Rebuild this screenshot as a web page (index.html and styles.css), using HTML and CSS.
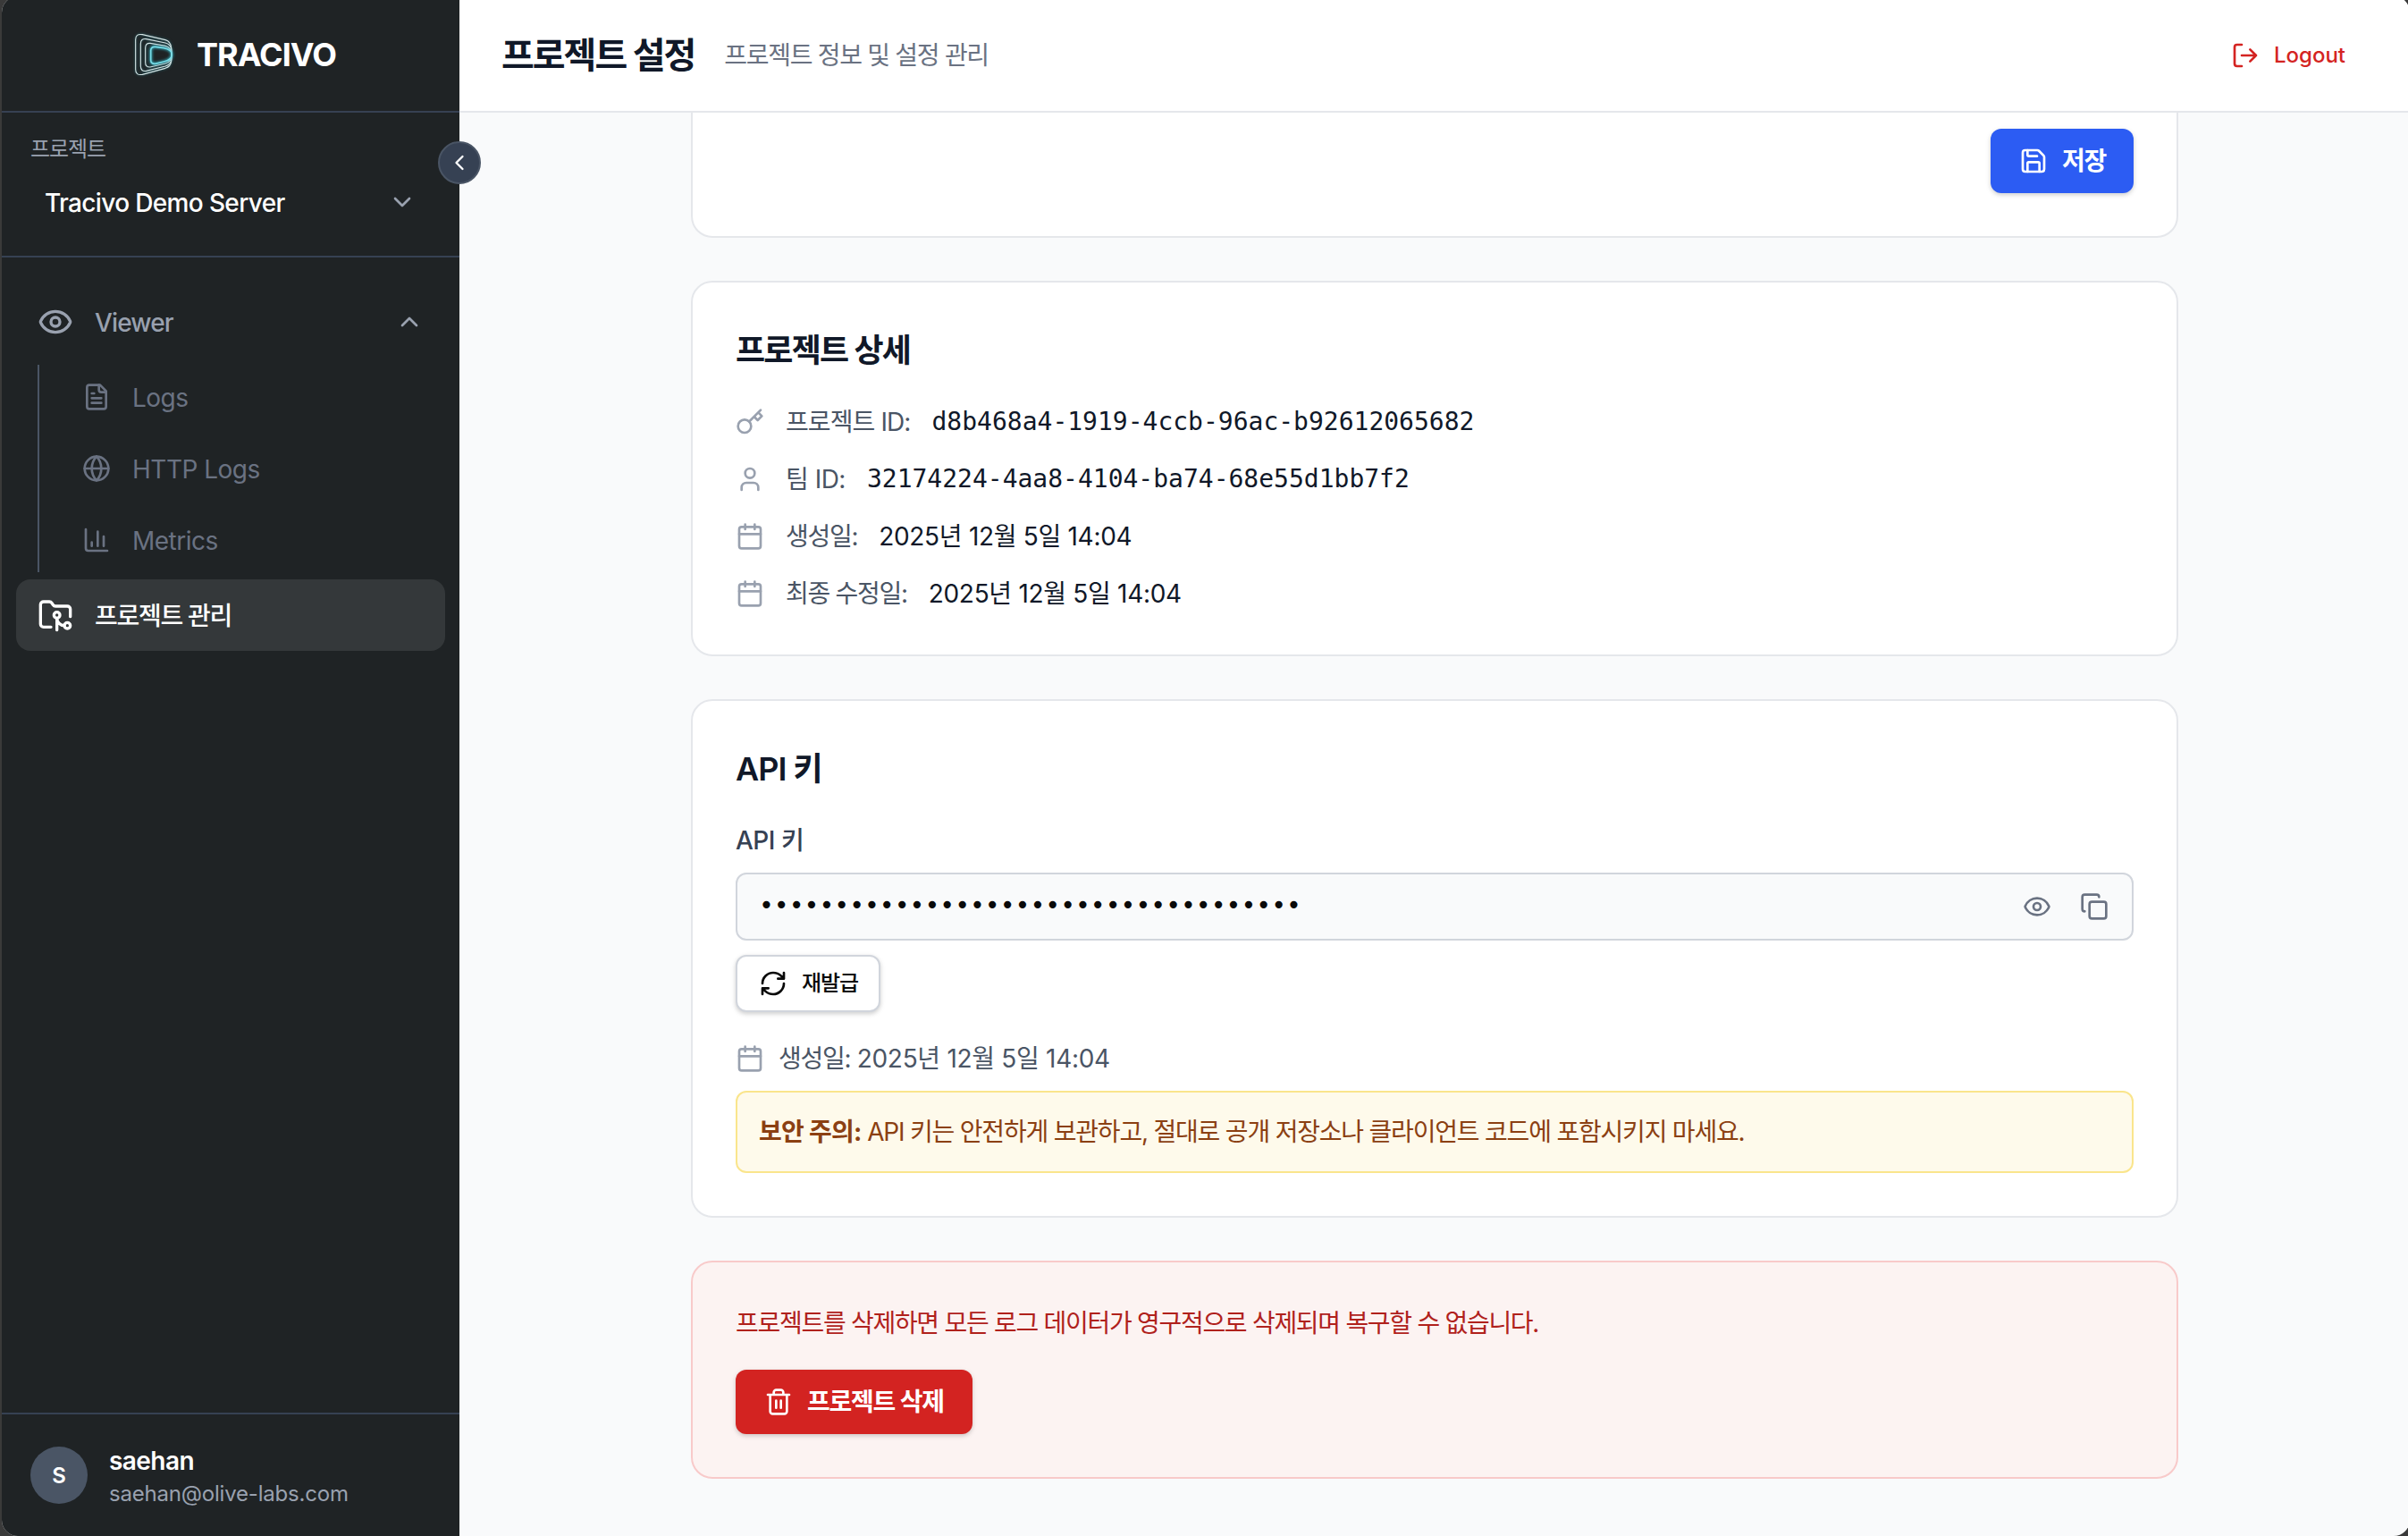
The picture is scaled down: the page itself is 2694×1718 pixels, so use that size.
FILE: index.html
```html
<!DOCTYPE html>
<html lang="ko">
<head>
<meta charset="utf-8">
<title>TRACIVO</title>
<link rel="stylesheet" href="styles.css">
</head>
<body>
<svg class="defs" width="0" height="0" aria-hidden="true">
  <symbol id="eye" viewBox="0 0 24 24"><path d="M2.062 12.348a1 1 0 0 1 0-.696 10.75 10.75 0 0 1 19.876 0 1 1 0 0 1 0 .696 10.75 10.75 0 0 1-19.876 0"/><circle cx="12" cy="12" r="3"/></symbol>
  <symbol id="calendar" viewBox="0 0 24 24"><path d="M8 2v4M16 2v4M3 10h18"/><rect x="3" y="4" width="18" height="18" rx="2"/></symbol>
</svg>
<div class="app">
  <aside class="sidebar">
    <div class="brand">
      <svg class="logo" viewBox="0 0 270 240">
        <path class="ring" d="M65 70Q65 49 88 53L165 71Q183 76 185 98V142Q183 160 165 166L88 187Q65 191 65 170Z"/>
        <path class="ring" d="M82 84Q82 65 101 68L165 81Q184 86 186 105V135Q184 153 165 159L101 175Q82 178 82 159Z"/>
        <path class="ring" d="M98 98Q98 81 114 82L165 91Q186 97 187 120Q186 145 165 150L114 162Q98 163 98 147Z"/>
        <path class="ring core" d="M116 106Q117 93 131 94L160 98Q187 104 187 120Q187 138 160 144L131 151Q117 152 116 139Z"/>
      </svg>
      <span class="brand-name">TRACIVO</span>
    </div>
    <div class="project">
      <div class="project-label ko">프로젝트</div>
      <div class="project-select"><span class="project-name">Tracivo Demo Server</span>
        <svg class="icon" viewBox="0 0 24 24"><path d="m6 9 6 6 6-6"/></svg></div>
    </div>
    <nav class="nav">
      <div class="nav-item"><svg class="icon icon-lg"><use href="#eye"/></svg><span class="nav-text">Viewer</span>
        <svg class="icon" viewBox="0 0 24 24"><path d="m18 15-6-6-6 6"/></svg></div>
      <div class="subnav">
        <div class="sub-item"><svg class="icon" viewBox="0 0 24 24"><path d="M15 2H6a2 2 0 0 0-2 2v16a2 2 0 0 0 2 2h12a2 2 0 0 0 2-2V7Z"/><path d="M14 2v4a2 2 0 0 0 2 2h4M10 9H8M16 13H8M16 17H8"/></svg><span>Logs</span></div>
        <div class="sub-item"><svg class="icon" viewBox="0 0 24 24"><circle cx="12" cy="12" r="10"/><path d="M12 2a14.5 14.5 0 0 0 0 20 14.5 14.5 0 0 0 0-20M2 12h20"/></svg><span>HTTP Logs</span></div>
        <div class="sub-item"><svg class="icon" viewBox="0 0 24 24"><path d="M3 3v16a2 2 0 0 0 2 2h16M18 17V9M13 17V5M8 17v-3"/></svg><span>Metrics</span></div>
      </div>
      <div class="nav-item active"><svg class="icon icon-lg" viewBox="0 0 24 24"><path d="M18 19a5 5 0 0 1-5-5v8"/><path d="M9 20H4a2 2 0 0 1-2-2V5a2 2 0 0 1 2-2h3.9a2 2 0 0 1 1.69.9l.81 1.2a2 2 0 0 0 1.67.9H20a2 2 0 0 1 2 2v5"/><circle cx="13" cy="12" r="2"/><circle cx="20" cy="19" r="2"/></svg><span class="nav-text ko">프로젝트 관리</span></div>
    </nav>
    <div class="user">
      <div class="avatar">S</div>
      <div><div class="user-name">saehan</div><div class="user-mail">saehan@olive-labs.com</div></div>
    </div>
    <button class="collapse"><svg class="icon icon-sm" viewBox="0 0 24 24"><path d="m15 18-6-6 6-6"/></svg></button>
  </aside>
  <div class="main">
    <header class="topbar">
      <h1>프로젝트 설정</h1>
      <p class="ko">프로젝트 정보 및 설정 관리</p>
      <a class="logout"><svg class="icon" viewBox="0 0 24 24"><path d="M9 21H5a2 2 0 0 1-2-2V5a2 2 0 0 1 2-2h4M16 17l5-5-5-5M21 12H9"/></svg><span>Logout</span></a>
    </header>
    <main class="content">
      <section class="card card-cut">
        <button class="btn btn-blue"><svg class="icon" viewBox="0 0 24 24"><path d="M15.2 3a2 2 0 0 1 1.4.6l3.8 3.8a2 2 0 0 1 .6 1.4V19a2 2 0 0 1-2 2H5a2 2 0 0 1-2-2V5a2 2 0 0 1 2-2z"/><path d="M17 21v-7a1 1 0 0 0-1-1H8a1 1 0 0 0-1 1v7M7 3v4a1 1 0 0 0 1 1h7"/></svg><span class="ko">저장</span></button>
      </section>
      <section class="card">
        <h2>프로젝트 상세</h2>
        <div class="details">
          <div class="row"><svg class="icon" viewBox="0 0 24 24"><circle cx="7.5" cy="15.5" r="5.5"/><path d="m21 2-9.6 9.6M15.5 7.5l3 3L22 7l-3-3"/></svg><span class="key mixed">프로젝트 ID:</span><span class="mono">d8b468a4-1919-4ccb-96ac-b92612065682</span></div>
          <div class="row"><svg class="icon" viewBox="0 0 24 24"><path d="M19 21v-2a4 4 0 0 0-4-4H9a4 4 0 0 0-4 4v2"/><circle cx="12" cy="7" r="4"/></svg><span class="key latin">팀 ID:</span><span class="mono">32174224-4aa8-4104-ba74-68e55d1bb7f2</span></div>
          <div class="row"><svg class="icon"><use href="#calendar"/></svg><span class="key ko">생성일:</span><span class="date">2025년 12월 5일 14:04</span></div>
          <div class="row"><svg class="icon"><use href="#calendar"/></svg><span class="key ko">최종 수정일:</span><span class="date">2025년 12월 5일 14:04</span></div>
        </div>
      </section>
      <section class="card">
        <h2 class="title-mixed">API 키</h2>
        <div class="field-label">API 키</div>
        <div class="secret"><span class="dots">••••••••••••••••••••••••••••••••••••</span>
          <svg class="icon"><use href="#eye"/></svg>
          <svg class="icon" viewBox="0 0 24 24"><rect x="8" y="8" width="14" height="14" rx="2"/><path d="M4 16c-1.1 0-2-.9-2-2V4c0-1.1.9-2 2-2h10c1.1 0 2 .9 2 2"/></svg></div>
        <button class="btn btn-outline"><svg class="icon" viewBox="0 0 24 24"><path d="M3 12a9 9 0 0 1 9-9 9.75 9.75 0 0 1 6.74 2.74L21 8M21 3v5h-5M21 12a9 9 0 0 1-9 9 9.75 9.75 0 0 1-6.74-2.74L3 16M8 16H3v5"/></svg><span class="ko">재발급</span></button>
        <div class="row issued"><svg class="icon"><use href="#calendar"/></svg><span class="issued-text"><span class="issued-key">생성일:</span> 2025년 12월 5일 14:04</span></div>
        <div class="notice"><strong>보안 주의:</strong> API 키는 안전하게 보관하고, 절대로 공개 저장소나 클라이언트 코드에 포함시키지 마세요.</div>
      </section>
      <section class="card danger">
        <p class="ko">프로젝트를 삭제하면 모든 로그 데이터가 영구적으로 삭제되며 복구할 수 없습니다.</p>
        <button class="btn btn-red"><svg class="icon" viewBox="0 0 24 24"><path d="M3 6h18M19 6v14c0 1-1 2-2 2H7c-1 0-2-1-2-2V6M8 6V4c0-1 1-2 2-2h4c1 0 2 1 2 2v2M10 11v6M14 11v6"/></svg><span class="ko">프로젝트 삭제</span></button>
      </section>
    </main>
  </div>
</div>
</body>
</html>
```
FILE: styles.css
```css
* { box-sizing: border-box; margin: 0; padding: 0; }
html, body { height: 1718px; overflow: hidden; }
body {
  background: #3a3a3a;
  color: #0a0a0a;
  font-family: Inter, "Noto Sans CJK KR", sans-serif;
  font-size: 28px;
  line-height: 40px;
  white-space: nowrap;
}
button { font: inherit; color: inherit; border: 0; background: none; }
.defs { display: block; }
.ko { letter-spacing: -0.046em; }
.mixed { letter-spacing: -0.9px; }
.latin { letter-spacing: -0.5px; }

.icon {
  width: 32px;
  height: 32px;
  flex: none;
  fill: none;
  stroke: currentColor;
  stroke-width: 2;
  stroke-linecap: round;
  stroke-linejoin: round;
}
.icon-lg { width: 40px; height: 40px; }
.icon-sm { width: 28px; height: 28px; }

/* The window frame reaches slightly past the viewport */
.app {
  display: flex;
  width: 2694px;
  height: 1722px;
  margin: -4px 0 0 2px;
  border-radius: 18px;
  overflow: hidden;
  background: #f9fafb;
}

/* Sidebar */
.sidebar {
  position: relative;
  z-index: 1;
  flex: none;
  width: 512px;
  display: flex;
  flex-direction: column;
  background: #1f2325;
  color: #fff;
}
.brand {
  display: flex;
  align-items: center;
  height: 130px;
  padding: 2px 0 0 128px;
  border-bottom: 2px solid #364153;
}
.logo { width: 90px; height: 80px; filter: drop-shadow(0 0 1.5px #2b6b74); }
.ring { fill: none; stroke: #d3e3e4; stroke-width: 3.4; }
.core { stroke: #77dbe6; stroke-width: 5; filter: drop-shadow(0 0 5px #36bccb); }
.brand-name { font-size: 36px; font-weight: 700; letter-spacing: -1px; }
.project {
  height: 162px;
  padding: 21px 48px 0 32px;
  border-bottom: 2px solid #364153;
}
.project-label { font-size: 24px; line-height: 40px; color: #99a1af; }
.project-select {
  display: flex;
  align-items: center;
  justify-content: space-between;
  height: 78px;
  padding-left: 16px;
  font-weight: 500;
}
.project-select .icon { color: #99a1af; }
.project-name { padding-top: 1px; letter-spacing: -0.65px; }
.nav { flex: 1; padding: 32px 16px 0; font-weight: 500; }
.nav-item {
  display: flex;
  align-items: center;
  gap: 24px;
  height: 80px;
  padding: 0 24px;
  color: #99a1af;
}
.nav-text { flex: 1; padding-top: 1px; }
.nav-item .nav-text:not(.ko) { letter-spacing: -0.85px; }
.active { border-radius: 16px; background: #34383a; color: #fff; }
.subnav {
  display: grid;
  gap: 8px;
  margin: 8px 0 8px 24px;
  border-left: 2px solid #4a5565;
  color: #6a7282;
  font-weight: 400;
}
.sub-item { display: flex; align-items: center; gap: 24px; height: 72px; padding-left: 48px; letter-spacing: -0.5px; }
.sub-item span { padding-top: 1px; }
.user {
  display: flex;
  align-items: center;
  gap: 24px;
  height: 138px;
  padding-left: 32px;
  border-top: 2px solid #364153;
}
.avatar {
  display: grid;
  place-items: center;
  width: 64px;
  height: 64px;
  padding-top: 2px;
  border-radius: 50%;
  background: #4a5565;
  font-size: 24px;
  font-weight: 600;
}
.user-name { line-height: 40px; font-weight: 600; letter-spacing: -0.55px; }
.user-mail { padding-top: 1px; font-size: 24px; line-height: 32px; color: #99a1af; letter-spacing: -0.2px; }
.collapse {
  position: absolute;
  top: 162px;
  right: -24px;
  display: grid;
  place-items: center;
  width: 48px;
  height: 48px;
  border: 2px solid #4a5565;
  border-radius: 50%;
  background: #364153;
}

/* Top bar */
.main { flex: 1; min-width: 0; display: flex; flex-direction: column; }
.topbar {
  display: flex;
  align-items: center;
  height: 130px;
  flex: none;
  padding: 4px 72px 0 47px;
  border-bottom: 2px solid #e5e7eb;
  background: #fff;
}
h1 { font-size: 40px; font-weight: 700; color: #101828; letter-spacing: -2px; }
.topbar p { margin-left: 33px; color: #6a7282; }
.logout {
  display: flex;
  align-items: center;
  gap: 16px;
  margin-left: auto;
  font-size: 24px;
  font-weight: 500;
  color: #d42422;
}

/* Cards */
.content { display: flex; flex-direction: column; gap: 48px; padding-left: 259px; }
.card {
  width: 1664px;
  padding: 48px;
  border: 2px solid #e5e7eb;
  border-radius: 24px;
  background: #fff;
}
.card-cut {
  display: flex;
  justify-content: flex-end;
  padding-top: 18px;
  border-top: 0;
  border-top-left-radius: 0;
  border-top-right-radius: 0;
}
h2 { font-size: 36px; line-height: 56px; font-weight: 600; color: #101828; letter-spacing: -1.8px; }
.title-mixed { letter-spacing: -1px; }
.details { display: grid; gap: 24px; margin-top: 32px; }
.row { display: flex; align-items: center; height: 40px; gap: 24px; }
.row .icon { color: #99a1af; }
.key { color: #4a5565; }
.mono { font-family: "DejaVu Sans Mono", monospace; color: #101828; }
.date { color: #101828; letter-spacing: -0.3px; }
.btn {
  display: flex;
  align-items: center;
  gap: 16px;
  width: max-content;
  height: 72px;
  padding: 0 32px;
  border-radius: 12px;
  color: #fff;
  font-weight: 600;
  box-shadow: 0 2px 6px rgba(0, 0, 0, .1), 0 2px 4px rgba(0, 0, 0, .1);
}
.btn-blue { padding-right: 31px; background: #2c5cf3; }
.btn-red { margin-top: 32px; background: #d32321; }
.btn-outline {
  height: 64px;
  margin-top: 16px;
  padding: 0 23px 0 24px;
  border: 2px solid #d1d5dc;
  background: #fff;
  color: #0a0a0a;
  font-size: 24px;
  font-weight: 500;
}
.field-label { margin-top: 32px; font-weight: 500; color: #364153; letter-spacing: -0.5px; }
.secret {
  display: flex;
  align-items: center;
  gap: 32px;
  height: 76px;
  margin-top: 16px;
  padding: 0 26px 0 24px;
  border: 2px solid #d1d5dc;
  border-radius: 12px;
  background: #f9fafb;
  color: #6a7282;
}
.dots { flex: 1; padding-bottom: 2px; font-family: "DejaVu Sans Mono", monospace; color: #0a0a0a; }
.issued { margin-top: 32px; gap: 16px; }
.issued-text { color: #4a5565; letter-spacing: -0.3px; }
.issued-key { letter-spacing: -1.3px; }
.notice {
  height: 92px;
  margin-top: 16px;
  padding: 24px;
  border: 2px solid #fae58c;
  border-radius: 12px;
  background: #fefaeb;
  color: #8b4012;
  letter-spacing: -1.2px;
}
.notice strong { letter-spacing: -0.75px; }
.danger { border-color: #f8caca; background: #fcf3f2; }
.danger p { color: #b0211c; }
```
